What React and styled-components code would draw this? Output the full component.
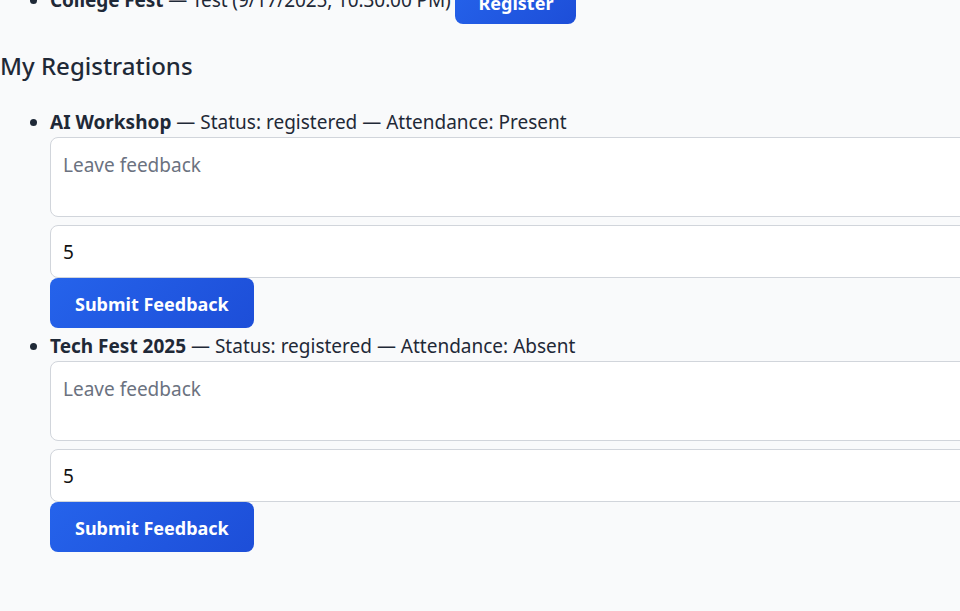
import React from "react";
import styled, { createGlobalStyle } from "styled-components";

const Global = createGlobalStyle`
  html, body {
    margin: 0;
    background: #f9fafb;
    overflow-x: hidden;
  }
  body {
    font-family: "Noto Sans", "Open Sans", sans-serif;
    color: #1f2937;
    font-size: 19px;
  }
`;

const Page = styled.main`
  margin-top: -20px;
  padding: 0 0 40px 0;
`;

const List = styled.ul`
  margin: 0;
  padding-left: 50px;
  list-style: disc;
`;

const Item = styled.li`
  line-height: 29px;
  letter-spacing: ${(p) => (p.$tight ? "-0.1px" : "0")};
`;

const Name = styled.strong`
  font-weight: 700;
`;

const Heading = styled.h2`
  font-size: 24px;
  font-weight: 500;
  margin: 26px 0 26px 0;
  line-height: 32px;
`;

const Button = styled.button`
  font-family: inherit;
  font-size: 18px;
  font-weight: 700;
  letter-spacing: 0;
  color: #fff;
  border: none;
  border-radius: 8px;
  padding: 2px ${(p) => (p.$small ? "23px" : "25px")} 0;
  height: ${(p) => (p.$small ? "44px" : "50px")};
  background: linear-gradient(135deg, #2563eb, #1d4ed8);
  cursor: pointer;
  vertical-align: middle;
`;

const Form = styled.div`
  display: flex;
  flex-direction: column;
  margin-bottom: 4px;
`;

const Field = styled.input`
  width: 960px;
  padding: 12px;
  border: 1px solid #d1d5db;
  border-radius: 8px;
  background: #fff;
  font-family: inherit;
  font-size: 19px;
  color: #111;
  margin: 0;
  &::placeholder {
    color: #6b7280;
  }
`;

const TextArea = styled(Field).attrs({ as: "textarea" })`
  height: 54px;
  padding: 14px 12px 10px;
  line-height: 26px;
  resize: none;
  margin-bottom: 8px;
`;

const NumberInput = styled(Field)`
  height: 27px;
`;

const SubmitRow = styled.div`
  display: flex;
`;

const registrations = [
  { name: "AI Workshop", status: "registered", attendance: "Present" },
  { name: "Tech Fest 2025", status: "registered", attendance: "Absent" },
];

const App = () => (
  <>
    <Global />
    <Page>
      <List>
        <Item $tight>
          <Name>College Fest</Name> — Test (9/17/2025, 10:30:00 PM){" "}
          <Button $small>Register</Button>
        </Item>
      </List>
      <Heading>My Registrations</Heading>
      <List>
        {registrations.map((r) => (
          <Item key={r.name}>
            <Name>{r.name}</Name> — Status: {r.status} — Attendance:{" "}
            {r.attendance}
            <Form>
              <TextArea placeholder="Leave feedback" />
              <NumberInput type="number" defaultValue={5} />
              <SubmitRow>
                <Button>Submit Feedback</Button>
              </SubmitRow>
            </Form>
          </Item>
        ))}
      </List>
    </Page>
  </>
);

export default App;
